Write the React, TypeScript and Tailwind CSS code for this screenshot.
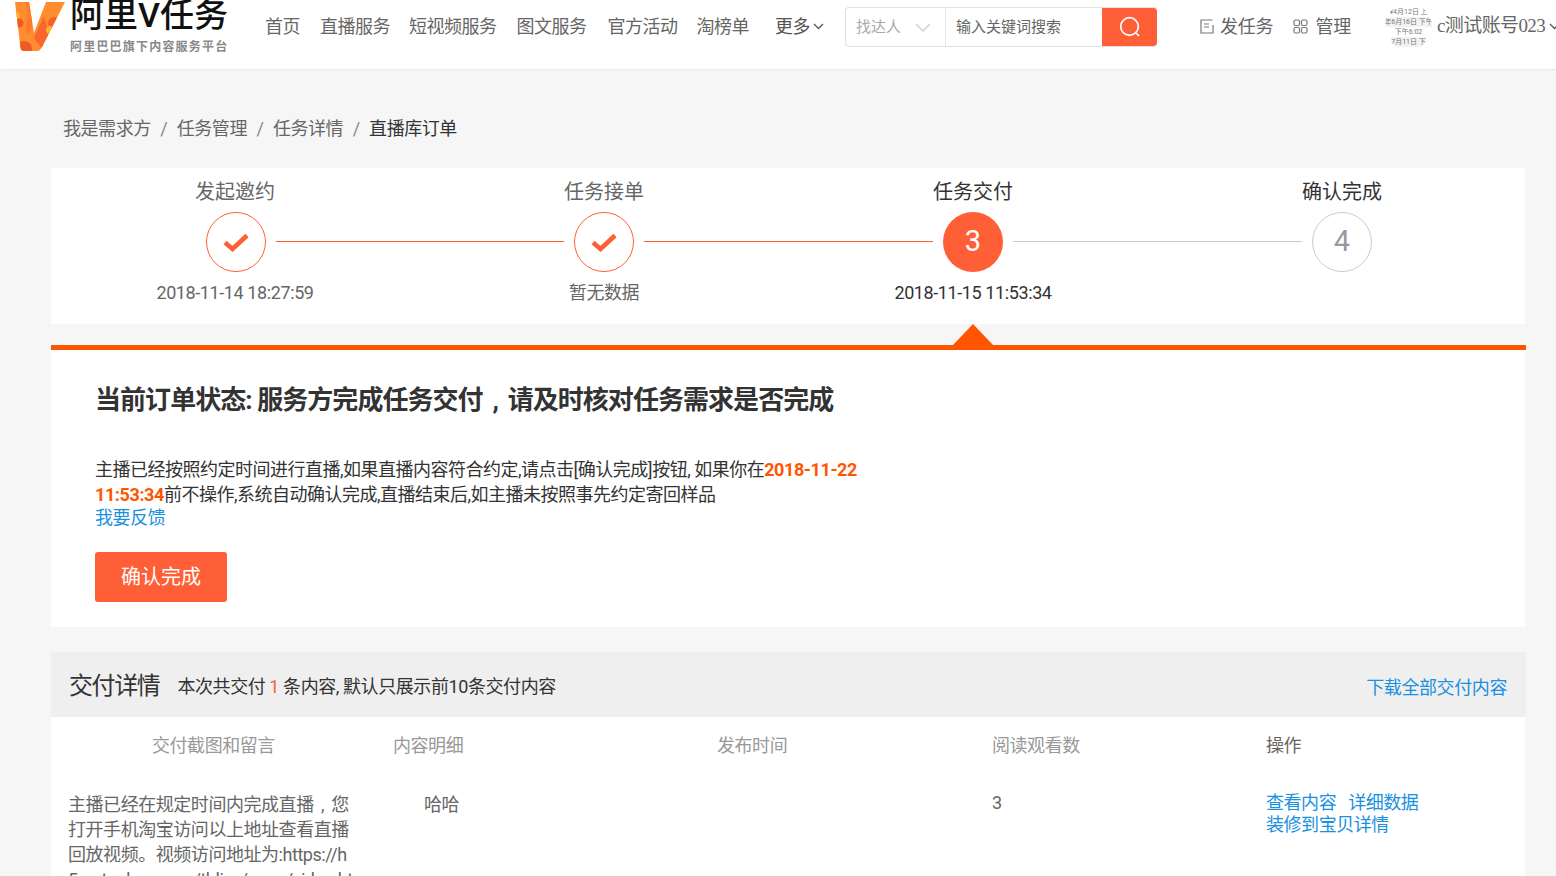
import React from "react";

const font = { fontFamily: 'Roboto, "Noto Sans CJK SC", sans-serif' };

function Check() {
  return (
    <svg width="26" height="20" viewBox="0 0 26 20" fill="none">
      <path d="M2 10.5 L9.5 17 L24 3.5" stroke="#ff5f37" strokeWidth="4.6" />
    </svg>
  );
}

function Step({ title, date, state, n, first }: { title: string; date?: string; state: "done" | "now" | "todo"; n?: string; first?: boolean }) {
  return (
    <div className="flex w-20 shrink-0 flex-col items-center">
      <div className={`h-6 whitespace-nowrap text-[20px] leading-[26px] ${state === "now" || state === "todo" ? "text-[#333]" : "text-[#666]"}`}>{title}</div>
      {state === "done" && (
        <div className={`mt-[9px] flex h-[60px] w-[60px] shrink-0 items-center justify-center rounded-full border border-[#ff5f37] ${first ? "ml-[2px]" : ""}`}><Check /></div>
      )}
      {state === "now" && (
        <div className="mt-[9px] flex h-[60px] w-[60px] shrink-0 items-center justify-center rounded-full bg-[#ff5f37] text-[29px] text-white">{n}</div>
      )}
      {state === "todo" && (
        <div className="mt-[9px] flex h-[60px] w-[60px] shrink-0 items-center justify-center rounded-full border border-[#ccc] text-[29px] text-[#999]">{n}</div>
      )}
      <div className={`mt-[9px] h-6 whitespace-nowrap text-[18px] leading-6 tracking-[-0.4px] ${state === "now" ? "text-[#333]" : "text-[#666]"}`}>{date}</div>
    </div>
  );
}

function Line({ on, first }: { on?: boolean; first?: boolean }) {
  return <div className={`mt-[62px] h-px ${first ? "ml-px w-[288px]" : "w-[289px]"} ${on ? "bg-[#ff5f37]" : "bg-[#ccc]"}`} />;
}

export default function App() {
  const nav: [string, string][] = [
    ["首页", "mr-5"],
    ["直播服务", "mr-[19px]"],
    ["短视频服务", "mr-5"],
    ["图文服务", "mr-[21px]"],
    ["官方活动", "mr-[19px]"],
    ["淘榜单", "mr-[26px]"],
  ];
  return (
    <div style={font} className="h-[876px] w-[1556px] overflow-hidden bg-[#f6f6f6] text-[#333]">
      <header className="flex h-[69px] w-[1556px] items-start overflow-hidden bg-white shadow-[0_1px_2px_rgba(0,0,0,0.06)]">
        <svg className="ml-[14px] mt-[2px] shrink-0" width="51" height="49" viewBox="0 0 51 49">
          <defs>
            <clipPath id="v"><path d="M1 0 H15 L20 31 L32 0 H51 L28 45 Q26 49 23 49 H10 Q7 49 6.500 46 Z" /></clipPath>
          </defs>
          <g clipPath="url(#v)">
            <rect width="51" height="49" fill="#ff8c2e" />
            <path d="M11 0 Q16 10 12 22 Q10 30 16 32 L22 0 Z" fill="#fb7a2c" />
            <circle cx="1" cy="14" r="5" fill="#ffb02e" />
            <circle cx="5" cy="21" r="4.500" fill="#ee5a24" />
            <circle cx="10" cy="47" r="8" fill="#ee5a24" />
            <path d="M30 49 L20 36 L30 14 Q32 26 38 30 Z" fill="#f9652c" />
            <circle cx="40" cy="21" r="6" fill="#f4612a" />
            <circle cx="36" cy="28" r="4" fill="#ffb02e" />
          </g>
        </svg>
        <div className="ml-[5px] flex w-[165px] shrink-0 flex-col">
          <div className="-mt-[3px] h-[36px] whitespace-nowrap text-[34px] font-medium leading-[36px] text-[#111]">阿里V任务</div>
          <div className="mt-[6px] whitespace-nowrap text-[12px] font-bold leading-[16px] tracking-[1.2px] text-[#888]">阿里巴巴旗下内容服务平台</div>
        </div>
        <nav className="ml-[30px] flex h-[52px] shrink-0 items-center text-[18px] tracking-[-0.5px] text-[#666]">
          {nav.map(([t, m]) => (
            <span key={t} className={`${m} whitespace-nowrap`}>{t}</span>
          ))}
          <span className="whitespace-nowrap text-[#555]">更多</span>
          <svg className="ml-[3px]" width="11" height="7" viewBox="0 0 11 7" fill="none"><path d="M1 1 L5.500 5.500 L10 1" stroke="#555" strokeWidth="1.3" /></svg>
        </nav>
        <div className="ml-[21px] mt-[7px] flex h-10 w-[312px] shrink-0 overflow-hidden rounded-[4px] border border-[#e0e0e6] border-r-0">
          <div className="flex w-[100px] shrink-0 items-center justify-between border-r border-[#e6e6ea] pl-[10px] pr-[14px] text-[15px] text-[#aaa]">
            <span>找达人</span>
            <svg width="16" height="9" viewBox="0 0 16 9" fill="none"><path d="M1 1 L8 8 L15 1" stroke="#ccd" strokeWidth="1.3" /></svg>
          </div>
          <div className="flex flex-1 items-center pl-[10px] text-[15px] text-[#666]">输入关键词搜索</div>
          <div className="-my-px flex w-[55px] shrink-0 items-center justify-center rounded-r-[4px] bg-[#ff5f37]">
            <svg width="22" height="22" viewBox="0 0 22 22" fill="none"><circle cx="10.500" cy="10.500" r="8.800" stroke="#fff" strokeWidth="1.7" /><path d="M16.500 16.500 L20 20" stroke="#fff" strokeWidth="1.7" /></svg>
          </div>
        </div>
        <div className="ml-[43px] flex h-[52px] shrink-0 items-center text-[18px] tracking-[-0.2px] text-[#666]">
          <svg width="14" height="15" viewBox="0 0 14 15" fill="none" stroke="#777" strokeWidth="1.2">
            <path d="M12.500 1 H1 V14 H13 V6" /><path d="M4 5 H9 M4 8 H9" />
          </svg>
          <span className="ml-[6px] whitespace-nowrap">发任务</span>
          <svg className="ml-[20px]" width="15" height="15" viewBox="0 0 15 15" fill="none" stroke="#777" strokeWidth="1.2">
            <rect x="1" y="1" width="5.500" height="5.500" rx="1.500" /><rect x="8.500" y="1" width="5.500" height="5.500" rx="1.500" />
            <rect x="1" y="8.500" width="5.500" height="5.500" rx="1.500" /><rect x="8.500" y="8.500" width="5.500" height="5.500" rx="1.500" />
          </svg>
          <span className="ml-[7px] whitespace-nowrap">管理</span>
        </div>
        <div className="ml-[34px] mt-[3px] flex h-[47px] w-[47px] shrink-0 flex-col items-center justify-center overflow-hidden whitespace-nowrap rounded-full bg-white text-[7px] leading-[10px] text-[#777]">
          <span>¥4月12日 上</span>
          <span className="bg-[#f2f2f2]">年6月16日 下午</span>
          <span>下午6:02</span>
          <span className="bg-[#f2f2f2]">7月11日 下</span>
        </div>
        <div className="ml-[5px] flex h-[52px] shrink-0 items-center whitespace-nowrap font-['Liberation_Serif','Noto_Sans_CJK_SC',serif] text-[19px] tracking-[-0.6px] text-[#666]">
          c测试账号023
          <svg className="ml-1" width="11" height="7" viewBox="0 0 11 7" fill="none"><path d="M1 1 L5.500 5.500 L10 1" stroke="#555" strokeWidth="1.3" /></svg>
        </div>
      </header>

      <main className="ml-[51px] w-[1475px]">
        <div className="ml-3 flex h-[99px] items-center pt-[20px] text-[18px] tracking-[-0.45px] text-[#666]">
          <span>我是需求方</span>
          <span className="mx-[9.500px] text-[#888]">/</span>
          <span>任务管理</span>
          <span className="mx-[9.500px] text-[#888]">/</span>
          <span>任务详情</span>
          <span className="mx-[9.500px] text-[#888]">/</span>
          <span className="text-[#333]">直播库订单</span>
        </div>

        <section className="flex h-[156px] w-[1474px] bg-white pl-[144px] pt-[11px]">
          <Step title="发起邀约" date="2018-11-14 18:27:59" state="done" first />
          <Line on first />
          <Step title="任务接单" date="暂无数据" state="done" />
          <Line on />
          <Step title="任务交付" date="2018-11-15 11:53:34" state="now" n="3" />
          <Line />
          <Step title="确认完成" state="todo" n="4" />
        </section>

        <div className="relative h-[21px]">
          <svg className="absolute left-[902px] top-0" width="40" height="21" viewBox="0 0 40 21"><path d="M20 0 L40 21 H0 Z" fill="#ff5500" /></svg>
        </div>
        <div className="h-[5px] bg-[#ff5500]" />

        <section className="h-[277px] w-[1474px] bg-white pl-[44px]">
          <h1 className="pt-[29px] text-[26px] font-bold leading-[42px] tracking-[-0.95px] text-[#333]">当前订单状态: 服务方完成任务交付<span className="inline-block w-[25px] text-center">,</span>请及时核对任务需求是否完成</h1>
          <p className="mt-[36px] w-[765px] text-[18px] leading-[25px] tracking-[-0.5px] text-[#333]">
            主播已经按照约定时间进行直播,如果直播内容符合约定,请点击[确认完成]按钮, 如果你在<b className="font-bold tracking-[-0.4px] text-[#ff5500]">2018-11-22 11:53:34</b>前不操作,系统自动确认完成,直播结束后,如主播未按照事先约定寄回样品
          </p>
          <a className="block text-[18px] leading-[22px] tracking-[-0.4px] text-[#1a90e0]">我要反馈</a>
          <button className="mt-[23px] block h-[50px] w-[132px] rounded-[3px] bg-[#ff5f37] text-[20px] text-white">确认完成</button>
        </section>

        <section className="mt-[25px]">
          <div className="flex h-[65px] w-[1475px] items-center justify-between bg-[#efefef] pl-[18px] pr-[19px] pt-[2px]">
            <div className="flex items-center">
              <span className="text-[24px] tracking-[-1.4px] text-[#333]">交付详情</span>
              <span className="ml-[18px] mt-[2px] text-[18px] tracking-[-0.42px] text-[#333]">本次共交付 <span className="text-[#ff5f37]">1</span> 条内容, 默认只展示前10条交付内容</span>
            </div>
            <a className="mt-[4px] text-[18px] tracking-[-0.4px] text-[#1a90e0]">下载全部交付内容</a>
          </div>
          <div className="h-[200px] w-[1474px] bg-white text-[18px] tracking-[-0.45px]">
            <div className="grid h-14 grid-cols-[342px_324px_275px_274px_1fr] items-center text-[#999]">
              <div className="pl-[101px]">交付截图和留言</div>
              <div>内容明细</div>
              <div>发布时间</div>
              <div>阅读观看数</div>
              <div className="text-[#666]">操作</div>
            </div>
            <div className="grid grid-cols-[342px_324px_275px_274px_1fr] pt-[19px] text-[#666]">
              <div className="w-[306px] break-all pl-[17px] leading-[25px]">主播已经在规定时间内完成直播<span className="inline-block w-[17.500px] text-center">,</span>您打开手机淘宝访问以上地址查看直播回放视频。视频访问地址为:https://h5.m.taobao.com/tblive/open/video.html</div>
              <div className="pl-[31px] leading-[25px]">哈哈</div>
              <div />
              <div className="leading-[22px]">3</div>
              <div className="leading-[22px] text-[#1a90e0]">
                <div><a>查看内容</a><a className="ml-3">详细数据</a></div>
                <div><a>装修到宝贝详情</a></div>
              </div>
            </div>
          </div>
        </section>
      </main>
    </div>
  );
}
